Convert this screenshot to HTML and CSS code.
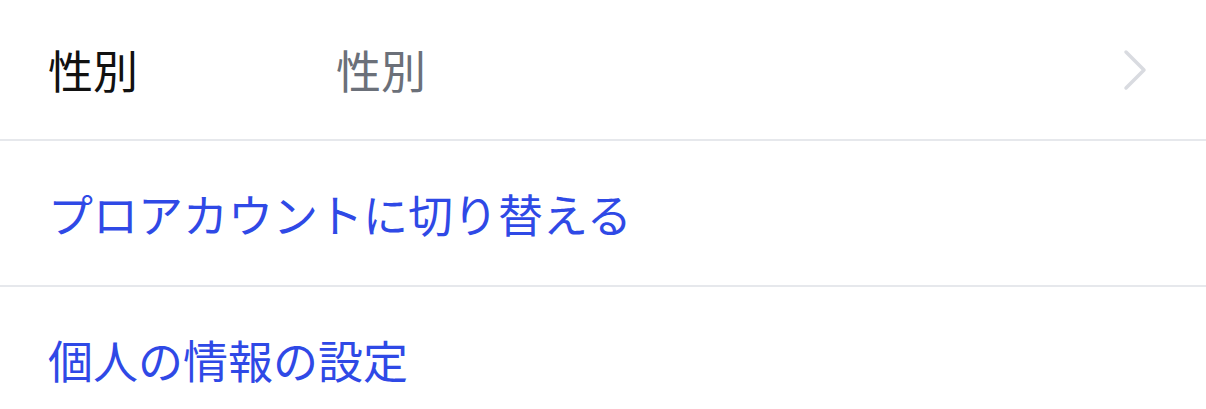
FILE: index.html
```html
<!DOCTYPE html>
<html lang="ja">
<head>
<meta charset="utf-8">
<link rel="stylesheet" href="styles.css">
</head>
<body>
<div class="list">
  <div class="row row-first">
    <span class="label">性別</span>
    <span class="value">性別</span>
    <svg class="chevron" width="26" height="44" viewBox="0 0 26 44" aria-hidden="true">
      <path d="M4 4 L22 22 L4 40" fill="none" stroke="#d9dbe0" stroke-width="3.5" stroke-linecap="round" stroke-linejoin="round"/>
    </svg>
  </div>
  <div class="row">
    <span class="link">プロアカウントに切り替える</span>
  </div>
  <div class="row row-last">
    <span class="link">個人の情報の設定</span>
  </div>
</div>
</body>
</html>
```
FILE: styles.css
```css
html, body {
  margin: 0;
  padding: 0;
  background: #ffffff;
}
body {
  font-family: "Noto Sans CJK JP", "Noto Sans", sans-serif;
  width: 1206px;
  height: 409px;
  overflow: hidden;
}
.list {
  display: flex;
  flex-direction: column;
  height: 409px;
}
.row {
  display: flex;
  align-items: center;
  height: 144px;
  padding: 0 0 0 48px;
  border-bottom: 2px solid #e6e8ec;
  font-size: 45px;
  line-height: 1;
}
.row-first {
  height: 139px;
  padding-right: 58px;
}
.row-last {
  border-bottom: none;
  height: 122px;
  align-items: flex-start;
  padding-top: 50px;
  box-sizing: border-box;
}
.label {
  width: 288px;
  color: #111111;
}
.value {
  flex: 1;
  color: #6b7079;
}
.chevron {
  display: block;
}
.link {
  color: #2f49e6;
}
```
